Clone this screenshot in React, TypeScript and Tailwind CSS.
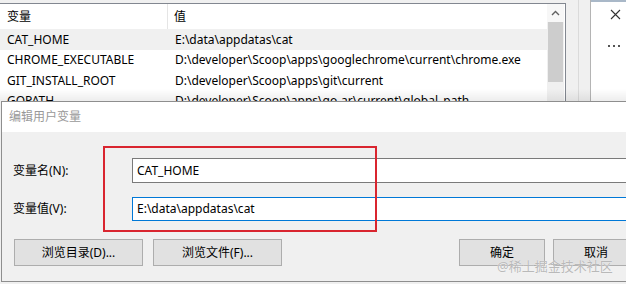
import React from "react";

const FONT = { fontFamily: '"Noto Sans", "Noto Sans CJK SC", sans-serif' };

const rows = [
  { n: "CAT_HOME", v: "E:\\data\\appdatas\\cat", sel: true },
  { n: "CHROME_EXECUTABLE", v: "D:\\developer\\Scoop\\apps\\googlechrome\\current\\chrome.exe" },
  { n: "GIT_INSTALL_ROOT", v: "D:\\developer\\Scoop\\apps\\git\\current" },
  { n: "GOPATH", v: "D:\\developer\\Scoop\\apps\\go-ar\\current\\global_path" },
];

function Btn({ children, className = "" }: { children: React.ReactNode; className?: string }) {
  return (
    <div
      className={`h-[27px] flex items-center justify-center bg-[#e1e1e1] border border-[#adadad] text-[12px] text-black shrink-0 ${className}`}
    >
      {children}
    </div>
  );
}

export default function App() {
  return (
    <div className="w-[626px] h-[284px] overflow-hidden relative bg-[#f0f0f0]" style={FONT}>
      {/* background window */}
      <div className="h-[101px] flex relative overflow-hidden">
        <div className="w-[566px] shrink-0 pt-[3px]">
          <div className="h-[98px] border-t border-r border-[#828790] bg-white flex">
            <div className="w-[547px] shrink-0 text-[12px] text-black">
              <div className="h-[25px] flex items-center">
                <div className="w-[168px] pl-[7px] h-full flex items-center border-r border-[#e5e5e5]">变量</div>
                <div className="pl-[6px]">值</div>
              </div>
              {rows.map((r, i) => (
                <div
                  key={r.n}
                  className={`${i === 0 ? "h-[21px]" : "h-[20.5px]"} flex items-center whitespace-nowrap ${r.sel ? "bg-[#f0f0f0]" : ""}`}
                >
                  <div className="w-[168px] pl-[7px] shrink-0">{r.n}</div>
                  <div className="pl-[7px]">{r.v}</div>
                </div>
              ))}
            </div>
            <div className="w-[17px] shrink-0 flex flex-col bg-[#f0f0f0]">
              <div className="h-[18px] flex items-center justify-center bg-[#f7f7f7]">
                <svg width="9" height="6" viewBox="0 0 9 6">
                  <path d="M1 5 L4.5 1.5 L8 5" fill="none" stroke="#606060" strokeWidth="1.4" />
                </svg>
              </div>
              <div className="h-[60px] mx-[1px] bg-[#cdcdcd]" />
              <div className="flex-1" />
            </div>
          </div>
        </div>
        <div className="w-[12px] shrink-0" />
        <div className="w-[1px] shrink-0 bg-[#dadada]" />
        <div className="w-[11px] shrink-0" />
        <div className="w-[1px] shrink-0 bg-[#b4b4b4]" />
        <div className="flex-1 bg-white border-t-2 border-[#a9b8c8] relative">
          <svg className="absolute left-[19px] top-[7px]" width="11" height="11" viewBox="0 0 11 11">
            <path d="M1 1 L10 10 M10 1 L1 10" stroke="#333" strokeWidth="1.1" />
          </svg>
          <div className="absolute left-[17px] top-[43px] flex gap-[3px]">
            <div className="w-[2px] h-[2px] bg-[#555]" />
            <div className="w-[2px] h-[2px] bg-[#555]" />
            <div className="w-[2px] h-[2px] bg-[#555]" />
          </div>
        </div>
        <div className="absolute left-0 right-0 bottom-0 h-[12px] bg-gradient-to-b from-transparent to-[rgba(0,0,0,0.07)] pointer-events-none" />
      </div>

      {/* dialog */}
      <div className="pl-[1px]">
        <div className="border-l border-t border-b border-[#8e8e8e]">
          <div className="h-[30px] bg-white flex items-center pl-[7px] text-[12px] text-[#999999]">编辑用户变量</div>
          <div className="h-[149px] bg-[#f0f0f0] pt-[26px] pl-[11px] text-[12px] text-black">
            <div className="flex items-center h-[25px]">
              <div className="w-[119px] shrink-0">变量名(N):</div>
              <div className="w-[520px] h-[25px] shrink-0 bg-white border border-[#7a7a7a] flex items-center pl-[4px]">
                CAT_HOME
              </div>
            </div>
            <div className="flex items-center h-[24px] mt-[14px]">
              <div className="w-[119px] shrink-0">变量值(V):</div>
              <div className="w-[520px] h-[24px] shrink-0 bg-white border border-[#0078d7] flex items-center pl-[4px]">
                E:\data\appdatas\cat
              </div>
            </div>
            <div className="flex mt-[18px] ml-[1px]">
              <Btn className="w-[129px]">浏览目录(D)...</Btn>
              <Btn className="w-[129px] ml-[10px]">浏览文件(F)...</Btn>
              <Btn className="w-[86px] ml-[177px]">确定</Btn>
              <Btn className="w-[86px] ml-[8px]">取消</Btn>
            </div>
          </div>
        </div>
      </div>

      {/* red annotation */}
      <div className="absolute left-[103px] top-[146px] w-[274px] h-[86px] border-2 border-[#d9252f] pointer-events-none" />

      {/* watermark */}
      <div
        className="absolute left-[497px] top-[257px] text-[13px] leading-[18px] text-[#b9b9b9] whitespace-nowrap pointer-events-none"
        style={{ textShadow: "0 0 1px #ffffff" }}
      >
        @稀土掘金技术社区
      </div>
    </div>
  );
}
